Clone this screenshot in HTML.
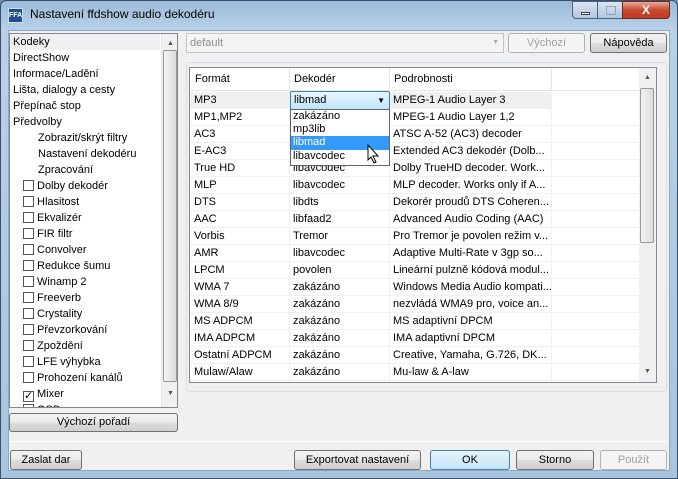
<!DOCTYPE html>
<html><head><meta charset="utf-8"><style>
*{box-sizing:border-box;margin:0;padding:0}
body{width:678px;height:479px;overflow:hidden;background:#6f93b8;font-family:"Liberation Sans",sans-serif;font-size:11px;color:#000;position:relative}
.a{position:absolute}
.frame{left:0;top:0;width:678px;height:479px;background:linear-gradient(180deg,#9cbbd9 0,#b9d1e8 30px,#a9c4df 100%);border:1px solid #3b4f66;border-radius:6px 6px 0 0}
.client{left:8px;top:30px;width:662px;height:441px;background:#f0f0f0;border:1px solid #8ea6c0}
.btn{position:absolute;height:20px;border:1px solid #707070;border-radius:3px;background:linear-gradient(#f2f2f2,#ebebeb 50%,#dddddd 51%,#cfcfcf);text-align:center;line-height:18px;font-size:11px}
.dis{color:#a0a0a0;border-color:#adb2b5;background:#f4f4f4}
.li{position:absolute;left:13px;height:16px;line-height:16px;white-space:nowrap}
.cb{display:inline-block;width:11px;height:11px;border:1px solid #555;background:#fff;vertical-align:-2px;margin-right:3px;position:relative}
.row{position:absolute;left:0;width:449px;height:17px;border-bottom:1px solid #f0f0f0;line-height:16px}
.row span{position:absolute;top:0;white-space:nowrap}
.c1{left:4px}.c2{left:103px}.c3{left:203px}
.vl{position:absolute;top:0;width:1px;background:#f0f0f0}
</style></head><body>
<div class="a frame"></div>
<div class="a" style="left:8px;top:8px;width:15px;height:15px;background:#1f4f8a;border:1px solid #cde;color:#fff;font-size:7px;line-height:13px;text-align:center;font-weight:bold">FFA</div>
<div class="a" style="left:30px;top:6px;font-size:12px;line-height:16px">Nastavení ffdshow audio dekodéru</div>
<div class="a" style="left:572px;top:1px;width:26px;height:18px;border:1px solid #4a6280;border-radius:0 0 0 4px;background:linear-gradient(#dbe6f3,#b2c6dd)"><div class="a" style="left:8px;top:10px;width:9px;height:3px;background:#fff;border:1px solid #445"></div></div>
<div class="a" style="left:597px;top:1px;width:26px;height:18px;border:1px solid #4a6280;background:linear-gradient(#dbe6f3,#b2c6dd)"><div class="a" style="left:8px;top:4px;width:10px;height:9px;border:1px solid #8aa;"></div></div>
<div class="a" style="left:622px;top:1px;width:48px;height:18px;border:1px solid #6a2a20;border-radius:0 0 4px 0;background:linear-gradient(#e9a99a,#c74a34 50%,#c23a22);color:#fff;font-weight:bold;text-align:center;line-height:16px;font-size:12px">X</div>
<div class="a client"></div>

<!-- left list -->
<div class="a" style="left:9px;top:33px;width:169px;height:375px;background:#fff;border:1px solid #828790;overflow:hidden">
<div class="li" style="left:0;width:150px;top:0;padding-left:3px;background:#f0f0f0">Kodeky</div>
<div class="li" style="left:3px;top:16px">DirectShow</div>
<div class="li" style="left:3px;top:32px">Informace/Ladění</div>
<div class="li" style="left:3px;top:48px">Lišta, dialogy a cesty</div>
<div class="li" style="left:3px;top:64px">Přepínač stop</div>
<div class="li" style="left:3px;top:80px">Předvolby</div>
<div class="li" style="left:28px;top:96px">Zobrazit/skrýt filtry</div>
<div class="li" style="left:28px;top:112px">Nastavení dekodéru</div>
<div class="li" style="left:28px;top:128px">Zpracování</div>
<div class="li" style="top:144px"><i class="cb"></i>Dolby dekodér</div>
<div class="li" style="top:160px"><i class="cb"></i>Hlasitost</div>
<div class="li" style="top:176px"><i class="cb"></i>Ekvalizér</div>
<div class="li" style="top:192px"><i class="cb"></i>FIR filtr</div>
<div class="li" style="top:208px"><i class="cb"></i>Convolver</div>
<div class="li" style="top:224px"><i class="cb"></i>Redukce šumu</div>
<div class="li" style="top:240px"><i class="cb"></i>Winamp 2</div>
<div class="li" style="top:256px"><i class="cb"></i>Freeverb</div>
<div class="li" style="top:272px"><i class="cb"></i>Crystality</div>
<div class="li" style="top:288px"><i class="cb"></i>Převzorkování</div>
<div class="li" style="top:304px"><i class="cb"></i>Zpoždění</div>
<div class="li" style="top:320px"><i class="cb"></i>LFE výhybka</div>
<div class="li" style="top:336px"><i class="cb"></i>Prohození kanálů</div>
<div class="li" style="top:352px"><i class="cb" style="font-size:11px;line-height:9px;text-align:center;font-style:normal">✓</i>Mixer</div>
<div class="li" style="top:368px"><i class="cb"></i>OSD</div>
<div class="a" style="left:151px;top:0;width:17px;height:373px;background:#f0f0f0;border-left:1px solid #e6e6e6">
<div class="a" style="left:5px;top:6px;font-size:7px;color:#555">▲</div>
<div class="a" style="left:1px;top:16px;width:14px;height:332px;border:1px solid #979797;border-radius:2px;background:linear-gradient(90deg,#f3f3f3,#dcdcdc)"></div>
<div class="a" style="left:5px;top:356px;font-size:7px;color:#555">▼</div>
</div>
</div>
<div class="btn" style="left:9px;top:413px;width:169px;height:19px;line-height:17px">Výchozí pořadí</div>

<!-- top right -->
<div class="a" style="left:186px;top:33px;width:318px;height:20px;border:1px solid #c5c5c5;background:#f4f4f4;color:#8d8d8d;padding-left:3px;line-height:18px">default<span style="position:absolute;right:4px;font-size:7px;color:#aaa">▼</span></div>
<div class="btn dis" style="left:508px;top:33px;width:77px">Výchozí</div>
<div class="btn" style="left:590px;top:33px;width:77px">Nápověda</div>

<!-- group -->
<div class="a" style="left:186px;top:62px;width:481px;height:330px;border:1px solid #d5dfe5;border-radius:3px"></div>
<div class="a" style="left:189px;top:67px;width:468px;height:316px;background:#fff;border:1px solid #828790;overflow:hidden">
<div class="a" style="left:0;top:0;width:450px;height:23px;border-bottom:1px solid #e5e5e5;line-height:22px">
<span class="a" style="left:5px">Formát</span><span class="a" style="left:104px">Dekodér</span><span class="a" style="left:204px">Podrobnosti</span>
<div class="vl" style="left:99px;height:23px;background:#e5e5e5"></div><div class="vl" style="left:199px;height:23px;background:#e5e5e5"></div><div class="vl" style="left:361px;height:23px;background:#e5e5e5"></div>
</div>
<div class="a" style="left:0;top:24px;width:450px;height:300px">
<div class="vl" style="left:99px;height:300px"></div><div class="vl" style="left:199px;height:300px"></div><div class="vl" style="left:361px;height:300px"></div>
<div class="row" style="top:0;background:#f0f0f0;width:361px"><span class="c1">MP3</span><span class="c3">MPEG-1 Audio Layer 3</span></div>
<div class="row" style="top:17px"><span class="c1">MP1,MP2</span><span class="c3">MPEG-1 Audio Layer 1,2</span></div>
<div class="row" style="top:34px"><span class="c1">AC3</span><span class="c3">ATSC A-52 (AC3) decoder</span></div>
<div class="row" style="top:51px"><span class="c1">E-AC3</span><span class="c3">Extended AC3 dekodér (Dolb...</span></div>
<div class="row" style="top:68px"><span class="c1">True HD</span><span class="c2">libavcodec</span><span class="c3">Dolby TrueHD decoder. Work...</span></div>
<div class="row" style="top:85px"><span class="c1">MLP</span><span class="c2">libavcodec</span><span class="c3">MLP decoder. Works only if A...</span></div>
<div class="row" style="top:102px"><span class="c1">DTS</span><span class="c2">libdts</span><span class="c3">Dekorér proudů DTS Coheren...</span></div>
<div class="row" style="top:119px"><span class="c1">AAC</span><span class="c2">libfaad2</span><span class="c3">Advanced Audio Coding (AAC)</span></div>
<div class="row" style="top:136px"><span class="c1">Vorbis</span><span class="c2">Tremor</span><span class="c3">Pro Tremor je povolen režim v...</span></div>
<div class="row" style="top:153px"><span class="c1">AMR</span><span class="c2">libavcodec</span><span class="c3">Adaptive Multi-Rate v 3gp so...</span></div>
<div class="row" style="top:170px"><span class="c1">LPCM</span><span class="c2">povolen</span><span class="c3">Lineární pulzně kódová modul...</span></div>
<div class="row" style="top:187px"><span class="c1">WMA 7</span><span class="c2">zakázáno</span><span class="c3">Windows Media Audio kompati...</span></div>
<div class="row" style="top:204px"><span class="c1">WMA 8/9</span><span class="c2">zakázáno</span><span class="c3">nezvládá WMA9 pro, voice an...</span></div>
<div class="row" style="top:221px"><span class="c1">MS ADPCM</span><span class="c2">zakázáno</span><span class="c3">MS adaptivní DPCM</span></div>
<div class="row" style="top:238px"><span class="c1">IMA ADPCM</span><span class="c2">zakázáno</span><span class="c3">IMA adaptivní DPCM</span></div>
<div class="row" style="top:255px"><span class="c1">Ostatní ADPCM</span><span class="c2">zakázáno</span><span class="c3">Creative, Yamaha, G.726, DK...</span></div>
<div class="row" style="top:272px"><span class="c1">Mulaw/Alaw</span><span class="c2">zakázáno</span><span class="c3">Mu-law &amp; A-law</span></div>
</div>
<div class="a" style="left:449px;top:0;width:17px;height:314px;background:#f0f0f0">
<div class="a" style="left:5px;top:6px;font-size:7px;color:#555">▲</div>
<div class="a" style="left:1px;top:20px;width:14px;height:155px;border:1px solid #979797;border-radius:2px;background:linear-gradient(90deg,#f3f3f3,#dcdcdc)"></div>
<div class="a" style="left:5px;top:300px;font-size:7px;color:#555">▼</div>
</div>
</div>

<!-- dropdown -->
<div class="a" style="left:290px;top:91px;width:100px;height:19px;border:1px solid #3c7fb1;border-radius:2px;background:linear-gradient(#eaf6fd,#bee6fd);padding-left:3px;line-height:17px">libmad<span style="position:absolute;right:4px;font-size:8px">▼</span></div>
<div class="a" style="left:290px;top:109px;width:100px;height:57px;border:1px solid #646464;background:#fff;line-height:13px">
<div style="padding-left:2px;height:13px">zakázáno</div>
<div style="padding-left:2px;height:13px">mp3lib</div>
<div style="padding-left:2px;height:14px;background:#3399ff;color:#fff">libmad</div>
<div style="padding-left:2px;height:14px">libavcodec</div>
</div>
<svg class="a" style="left:367px;top:144px" width="14" height="20" viewBox="0 0 14 20"><path d="M1 1v15l3-3 3 6 2-1-3-6h5z" fill="#fff" stroke="#000" stroke-width="1"/></svg>

<!-- bottom -->
<div class="a" style="left:9px;top:441px;width:660px;height:1px;background:#d5d5d5;border-bottom:1px solid #fff"></div>
<div class="btn" style="left:10px;top:450px;width:72px">Zaslat dar</div>
<div class="btn" style="left:294px;top:450px;width:127px">Exportovat nastavení</div>
<div class="btn" style="left:430px;top:450px;width:80px;border-color:#3c7fb1;background:linear-gradient(#e5f4fc,#c4e5f6)">OK</div>
<div class="btn" style="left:516px;top:450px;width:78px">Storno</div>
<div class="btn dis" style="left:600px;top:450px;width:67px">Použít</div>
</body></html>
